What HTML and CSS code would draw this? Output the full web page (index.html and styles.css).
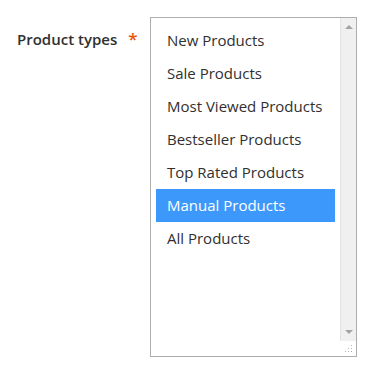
FILE: index.html
```html
<!DOCTYPE html>
<html lang="en">
<head>
	<meta charset="UTF-8">
	<title>Product types</title>
	<link rel="stylesheet" href="styles.css">
</head>
<body>
<div class="field">
	<label class="field-label">Product types <span class="required">*</span></label>
	<div class="multiselect">
		<ul class="options">
			<li>New Products</li>
			<li>Sale Products</li>
			<li>Most Viewed Products</li>
			<li>Bestseller Products</li>
			<li>Top Rated Products</li>
			<li class="selected">Manual Products</li>
			<li>All Products</li>
		</ul>
		<div class="scrollbar">
			<span class="arrow up"></span>
			<span class="arrow down"></span>
		</div>
		<svg class="grip" width="8" height="8" viewBox="0 0 8 8">
			<rect x="6" y="0" width="1" height="1" fill="#b5b5b5"/>
			<rect x="3" y="3" width="1" height="1" fill="#b5b5b5"/>
			<rect x="6" y="3" width="1" height="1" fill="#b5b5b5"/>
			<rect x="0" y="6" width="1" height="1" fill="#b5b5b5"/>
			<rect x="3" y="6" width="1" height="1" fill="#b5b5b5"/>
			<rect x="6" y="6" width="1" height="1" fill="#b5b5b5"/>
		</svg>
	</div>
</div>
</body>
</html>
```

FILE: styles.css
```css
body {
	margin: 0;
	background: #fff;
	font-family: "Open Sans", "Liberation Sans", sans-serif;
	color: #303030;
}
.field {
	display: flex;
	align-items: flex-start;
	padding: 17px 0 0 17px;
}
.field-label {
	width: 133px;
	font-size: 15px;
	font-weight: 600;
	line-height: 20px;
	padding-top: 12px;
}
.required {
	color: #eb5202;
	margin-left: 7px;
	font-size: 17px;
}
.multiselect {
	position: relative;
	display: flex;
	width: 205px;
	height: 338px;
	border: 1px solid #adadad;
}
.options {
	flex: 1;
	margin: 0;
	padding: 6px 5px 0 5px;
	list-style: none;
}
.options li {
	height: 33px;
	line-height: 33px;
	padding-left: 11px;
	font-size: 15px;
	white-space: nowrap;
}
.options li.selected {
	background: #3d98fb;
	color: #fff;
}
.scrollbar {
	position: relative;
	width: 15px;
	height: 323px;
	background: #f0f0f0;
	border-left: 1px solid #e3e3e3;
}
.arrow {
	position: absolute;
	left: 4px;
	width: 0;
	height: 0;
	border-left: 4px solid transparent;
	border-right: 4px solid transparent;
}
.arrow.up {
	top: 7px;
	border-bottom: 4px solid #a3a3a3;
}
.arrow.down {
	bottom: 7px;
	border-top: 4px solid #a3a3a3;
}
.grip {
	position: absolute;
	right: 3px;
	bottom: 3px;
}
```
